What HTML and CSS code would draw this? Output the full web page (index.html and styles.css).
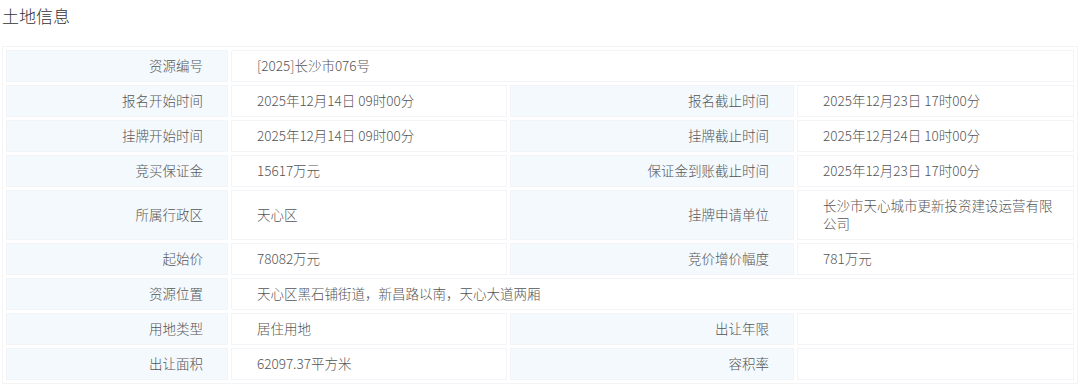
FILE: index.html
```html
<!DOCTYPE html>
<html lang="zh-CN">
<head>
<meta charset="utf-8">
<title>土地信息</title>
<link rel="stylesheet" href="styles.css">
</head>
<body>
<div class="title">土地信息</div>
<table class="info">
  <colgroup>
    <col class="c-label1">
    <col class="c-value1">
    <col class="c-label2">
    <col class="c-value2">
  </colgroup>
  <tbody>
    <tr>
      <td class="lab">资源编号</td>
      <td class="val" colspan="3">[2025]长沙市076号</td>
    </tr>
    <tr>
      <td class="lab">报名开始时间</td>
      <td class="val">2025年12月14日 09时00分</td>
      <td class="lab">报名截止时间</td>
      <td class="val">2025年12月23日 17时00分</td>
    </tr>
    <tr>
      <td class="lab">挂牌开始时间</td>
      <td class="val">2025年12月14日 09时00分</td>
      <td class="lab">挂牌截止时间</td>
      <td class="val">2025年12月24日 10时00分</td>
    </tr>
    <tr>
      <td class="lab">竞买保证金</td>
      <td class="val">15617万元</td>
      <td class="lab">保证金到账截止时间</td>
      <td class="val">2025年12月23日 17时00分</td>
    </tr>
    <tr>
      <td class="lab">所属行政区</td>
      <td class="val">天心区</td>
      <td class="lab">挂牌申请单位</td>
      <td class="val">长沙市天心城市更新投资建设运营有限公司</td>
    </tr>
    <tr>
      <td class="lab">起始价</td>
      <td class="val">78082万元</td>
      <td class="lab">竞价增价幅度</td>
      <td class="val">781万元</td>
    </tr>
    <tr>
      <td class="lab">资源位置</td>
      <td class="val" colspan="3">天心区黑石铺街道，新昌路以南，天心大道两厢</td>
    </tr>
    <tr>
      <td class="lab">用地类型</td>
      <td class="val">居住用地</td>
      <td class="lab">出让年限</td>
      <td class="val"></td>
    </tr>
    <tr>
      <td class="lab">出让面积</td>
      <td class="val">62097.37平方米</td>
      <td class="lab">容积率</td>
      <td class="val"></td>
    </tr>
  </tbody>
</table>
</body>
</html>
```

FILE: styles.css
```css
html, body {
  margin: 0;
  padding: 0;
  background: #ffffff;
}

body {
  font-family: "Noto Sans CJK SC", "Noto Sans", "Liberation Sans", sans-serif;
  color: #555555;
}

.title {
  margin: 5px 2px 0 2px;
  font-size: 17px;
  line-height: 22px;
  color: #333333;
  font-weight: 300;
}

.info {
  margin: 19px 0 0 2px;
  width: 1076px;
  table-layout: fixed;
  border-collapse: separate;
  border-spacing: 3px;
  border: 1px solid #f3f4f6;
  font-size: 13.5px;
  line-height: 18px;
  font-weight: 300;
}

.c-label1 { width: 222px; }
.c-value1 { width: 276px; }
.c-label2 { width: 284px; }
.c-value2 { width: 277px; }

.info td {
  border: 1px solid #f2f4f7;
  padding: 5px 20px 7px 25px;
  vertical-align: middle;
  box-sizing: border-box;
}

.info td.lab {
  background: #f3f9fd;
  text-align: right;
  color: #555555;
  padding: 5px 24px 7px 10px;
}

.info td.val {
  background: #ffffff;
  text-align: left;
  color: #555555;
}
```
